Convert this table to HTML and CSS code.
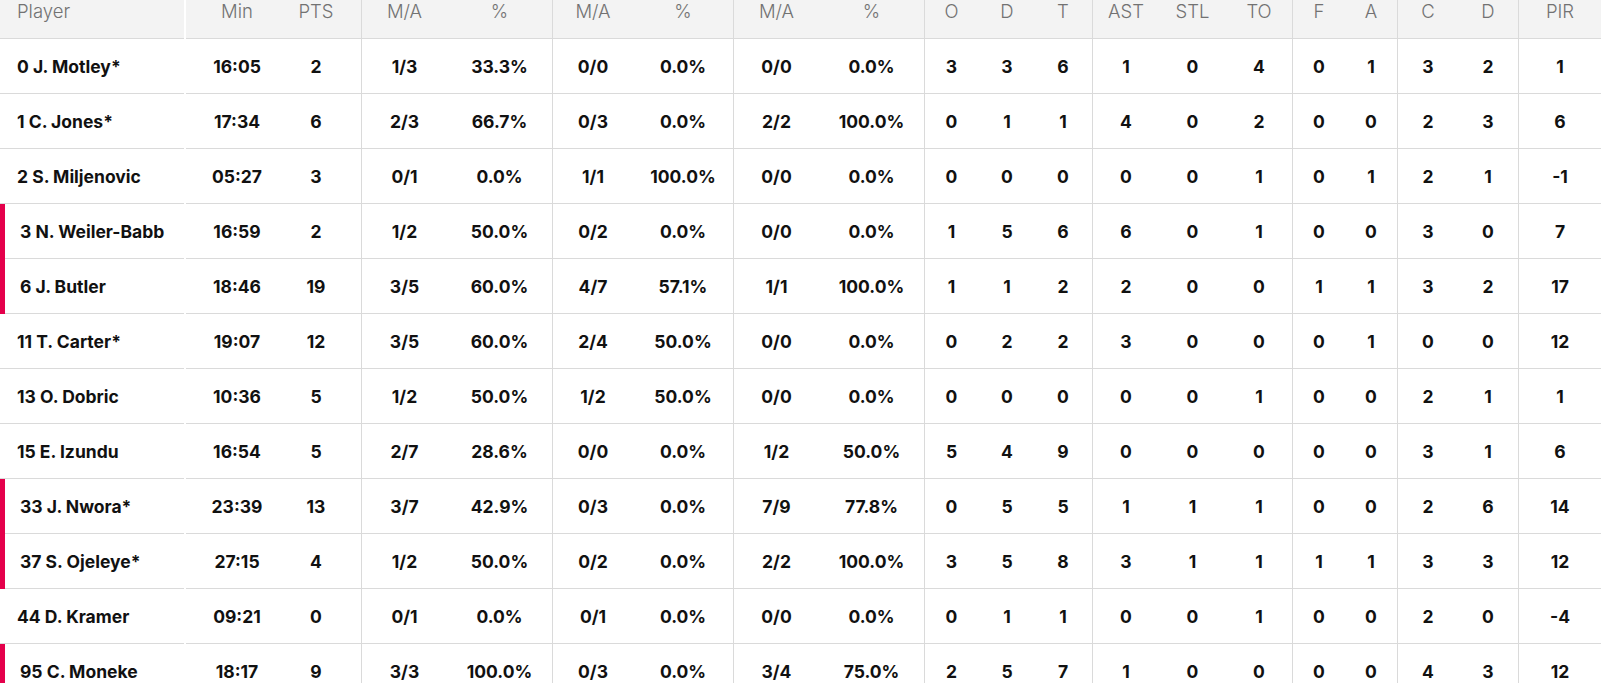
FILE: index.html
```html
<!DOCTYPE html>
<html lang="en">
<head>
<meta charset="utf-8">
<title>Box score</title>
<link rel="stylesheet" href="styles.css">
</head>
<body>
<div class="table">
  <div class="row head">
    <div class="cell name">Player</div>
    <div class="cell">Min</div><div class="cell p17">PTS</div>
    <div class="cell g p10">M/A</div><div class="cell p10">%</div>
    <div class="cell g p10">M/A</div><div class="cell p10">%</div>
    <div class="cell g p10">M/A</div><div class="cell p10">%</div>
    <div class="cell g p2">O</div><div class="cell p2">D</div><div class="cell p2">T</div>
    <div class="cell g">AST</div><div class="cell">STL</div><div class="cell">TO</div>
    <div class="cell g">F</div><div class="cell">A</div>
    <div class="cell g">C</div><div class="cell">D</div>
    <div class="cell g">PIR</div>
  </div>

  <div class="row">
    <div class="cell name">0 J. Motley*</div>
    <div class="cell">16:05</div><div class="cell p17">2</div>
    <div class="cell g p10">1/3</div><div class="cell p10">33.3%</div>
    <div class="cell g p10">0/0</div><div class="cell p10">0.0%</div>
    <div class="cell g p10">0/0</div><div class="cell p10">0.0%</div>
    <div class="cell g p2">3</div><div class="cell p2">3</div><div class="cell p2">6</div>
    <div class="cell g">1</div><div class="cell">0</div><div class="cell">4</div>
    <div class="cell g">0</div><div class="cell">1</div>
    <div class="cell g">3</div><div class="cell">2</div>
    <div class="cell g">1</div>
  </div>

  <div class="row">
    <div class="cell name">1 C. Jones*</div>
    <div class="cell">17:34</div><div class="cell p17">6</div>
    <div class="cell g p10">2/3</div><div class="cell p10">66.7%</div>
    <div class="cell g p10">0/3</div><div class="cell p10">0.0%</div>
    <div class="cell g p10">2/2</div><div class="cell p10">100.0%</div>
    <div class="cell g p2">0</div><div class="cell p2">1</div><div class="cell p2">1</div>
    <div class="cell g">4</div><div class="cell">0</div><div class="cell">2</div>
    <div class="cell g">0</div><div class="cell">0</div>
    <div class="cell g">2</div><div class="cell">3</div>
    <div class="cell g">6</div>
  </div>

  <div class="row">
    <div class="cell name">2 S. Miljenovic</div>
    <div class="cell">05:27</div><div class="cell p17">3</div>
    <div class="cell g p10">0/1</div><div class="cell p10">0.0%</div>
    <div class="cell g p10">1/1</div><div class="cell p10">100.0%</div>
    <div class="cell g p10">0/0</div><div class="cell p10">0.0%</div>
    <div class="cell g p2">0</div><div class="cell p2">0</div><div class="cell p2">0</div>
    <div class="cell g">0</div><div class="cell">0</div><div class="cell">1</div>
    <div class="cell g">0</div><div class="cell">1</div>
    <div class="cell g">2</div><div class="cell">1</div>
    <div class="cell g">-1</div>
  </div>

  <div class="row mark">
    <div class="cell name">3 N. Weiler-Babb</div>
    <div class="cell">16:59</div><div class="cell p17">2</div>
    <div class="cell g p10">1/2</div><div class="cell p10">50.0%</div>
    <div class="cell g p10">0/2</div><div class="cell p10">0.0%</div>
    <div class="cell g p10">0/0</div><div class="cell p10">0.0%</div>
    <div class="cell g p2">1</div><div class="cell p2">5</div><div class="cell p2">6</div>
    <div class="cell g">6</div><div class="cell">0</div><div class="cell">1</div>
    <div class="cell g">0</div><div class="cell">0</div>
    <div class="cell g">3</div><div class="cell">0</div>
    <div class="cell g">7</div>
  </div>

  <div class="row mark">
    <div class="cell name">6 J. Butler</div>
    <div class="cell">18:46</div><div class="cell p17">19</div>
    <div class="cell g p10">3/5</div><div class="cell p10">60.0%</div>
    <div class="cell g p10">4/7</div><div class="cell p10">57.1%</div>
    <div class="cell g p10">1/1</div><div class="cell p10">100.0%</div>
    <div class="cell g p2">1</div><div class="cell p2">1</div><div class="cell p2">2</div>
    <div class="cell g">2</div><div class="cell">0</div><div class="cell">0</div>
    <div class="cell g">1</div><div class="cell">1</div>
    <div class="cell g">3</div><div class="cell">2</div>
    <div class="cell g">17</div>
  </div>

  <div class="row">
    <div class="cell name">11 T. Carter*</div>
    <div class="cell">19:07</div><div class="cell p17">12</div>
    <div class="cell g p10">3/5</div><div class="cell p10">60.0%</div>
    <div class="cell g p10">2/4</div><div class="cell p10">50.0%</div>
    <div class="cell g p10">0/0</div><div class="cell p10">0.0%</div>
    <div class="cell g p2">0</div><div class="cell p2">2</div><div class="cell p2">2</div>
    <div class="cell g">3</div><div class="cell">0</div><div class="cell">0</div>
    <div class="cell g">0</div><div class="cell">1</div>
    <div class="cell g">0</div><div class="cell">0</div>
    <div class="cell g">12</div>
  </div>

  <div class="row">
    <div class="cell name">13 O. Dobric</div>
    <div class="cell">10:36</div><div class="cell p17">5</div>
    <div class="cell g p10">1/2</div><div class="cell p10">50.0%</div>
    <div class="cell g p10">1/2</div><div class="cell p10">50.0%</div>
    <div class="cell g p10">0/0</div><div class="cell p10">0.0%</div>
    <div class="cell g p2">0</div><div class="cell p2">0</div><div class="cell p2">0</div>
    <div class="cell g">0</div><div class="cell">0</div><div class="cell">1</div>
    <div class="cell g">0</div><div class="cell">0</div>
    <div class="cell g">2</div><div class="cell">1</div>
    <div class="cell g">1</div>
  </div>

  <div class="row">
    <div class="cell name">15 E. Izundu</div>
    <div class="cell">16:54</div><div class="cell p17">5</div>
    <div class="cell g p10">2/7</div><div class="cell p10">28.6%</div>
    <div class="cell g p10">0/0</div><div class="cell p10">0.0%</div>
    <div class="cell g p10">1/2</div><div class="cell p10">50.0%</div>
    <div class="cell g p2">5</div><div class="cell p2">4</div><div class="cell p2">9</div>
    <div class="cell g">0</div><div class="cell">0</div><div class="cell">0</div>
    <div class="cell g">0</div><div class="cell">0</div>
    <div class="cell g">3</div><div class="cell">1</div>
    <div class="cell g">6</div>
  </div>

  <div class="row mark">
    <div class="cell name">33 J. Nwora*</div>
    <div class="cell">23:39</div><div class="cell p17">13</div>
    <div class="cell g p10">3/7</div><div class="cell p10">42.9%</div>
    <div class="cell g p10">0/3</div><div class="cell p10">0.0%</div>
    <div class="cell g p10">7/9</div><div class="cell p10">77.8%</div>
    <div class="cell g p2">0</div><div class="cell p2">5</div><div class="cell p2">5</div>
    <div class="cell g">1</div><div class="cell">1</div><div class="cell">1</div>
    <div class="cell g">0</div><div class="cell">0</div>
    <div class="cell g">2</div><div class="cell">6</div>
    <div class="cell g">14</div>
  </div>

  <div class="row mark">
    <div class="cell name">37 S. Ojeleye*</div>
    <div class="cell">27:15</div><div class="cell p17">4</div>
    <div class="cell g p10">1/2</div><div class="cell p10">50.0%</div>
    <div class="cell g p10">0/2</div><div class="cell p10">0.0%</div>
    <div class="cell g p10">2/2</div><div class="cell p10">100.0%</div>
    <div class="cell g p2">3</div><div class="cell p2">5</div><div class="cell p2">8</div>
    <div class="cell g">3</div><div class="cell">1</div><div class="cell">1</div>
    <div class="cell g">1</div><div class="cell">1</div>
    <div class="cell g">3</div><div class="cell">3</div>
    <div class="cell g">12</div>
  </div>

  <div class="row">
    <div class="cell name">44 D. Kramer</div>
    <div class="cell">09:21</div><div class="cell p17">0</div>
    <div class="cell g p10">0/1</div><div class="cell p10">0.0%</div>
    <div class="cell g p10">0/1</div><div class="cell p10">0.0%</div>
    <div class="cell g p10">0/0</div><div class="cell p10">0.0%</div>
    <div class="cell g p2">0</div><div class="cell p2">1</div><div class="cell p2">1</div>
    <div class="cell g">0</div><div class="cell">0</div><div class="cell">1</div>
    <div class="cell g">0</div><div class="cell">0</div>
    <div class="cell g">2</div><div class="cell">0</div>
    <div class="cell g">-4</div>
  </div>

  <div class="row mark">
    <div class="cell name">95 C. Moneke</div>
    <div class="cell">18:17</div><div class="cell p17">9</div>
    <div class="cell g p10">3/3</div><div class="cell p10">100.0%</div>
    <div class="cell g p10">0/3</div><div class="cell p10">0.0%</div>
    <div class="cell g p10">3/4</div><div class="cell p10">75.0%</div>
    <div class="cell g p2">2</div><div class="cell p2">5</div><div class="cell p2">7</div>
    <div class="cell g">1</div><div class="cell">0</div><div class="cell">0</div>
    <div class="cell g">0</div><div class="cell">0</div>
    <div class="cell g">4</div><div class="cell">3</div>
    <div class="cell g">12</div>
  </div>
</div>
</body>
</html>
```
FILE: styles.css
```css
html, body {
  margin: 0;
  padding: 0;
  background: #ffffff;
}

body {
  font-family: Inter, Lato, "Liberation Sans", Arial, sans-serif;
  overflow: hidden;
}

.table {
  width: 1601px;
}

.row {
  display: grid;
  grid-template-columns: 186px 102px 73px 96px 95px 91px 90px 96px 95px 56px 56px 56px 67px 67px 66px 53px 52px 61px 60px 83px;
  height: 55px;
  background: #ffffff;
}

.cell {
  display: flex;
  align-items: center;
  justify-content: center;
  border-bottom: 1px solid #dadada;
  font-size: 17.5px;
  font-weight: 700;
  color: #111111;
  white-space: nowrap;
}

.head {
  height: 39px;
}

.head .cell {
  background: #f3f3f3;
  color: #727272;
  font-weight: 300;
  font-size: 18.5px;
  line-height: 22px;
  align-items: flex-start;
}

.name {
  justify-content: flex-start;
  padding-left: 17px;
  margin-right: 2px;
  position: relative;
}

.mark .name {
  padding-left: 20px;
}

.mark .name::before {
  content: "";
  position: absolute;
  left: 0;
  top: 0;
  bottom: -1px;
  width: 5px;
  background: #e4004b;
}

.g {
  border-left: 1px solid #dadada;
}

.p10 {
  padding-right: 10px;
}

.p17 {
  padding-right: 17px;
}

.p2 {
  padding-right: 2px;
}
```
